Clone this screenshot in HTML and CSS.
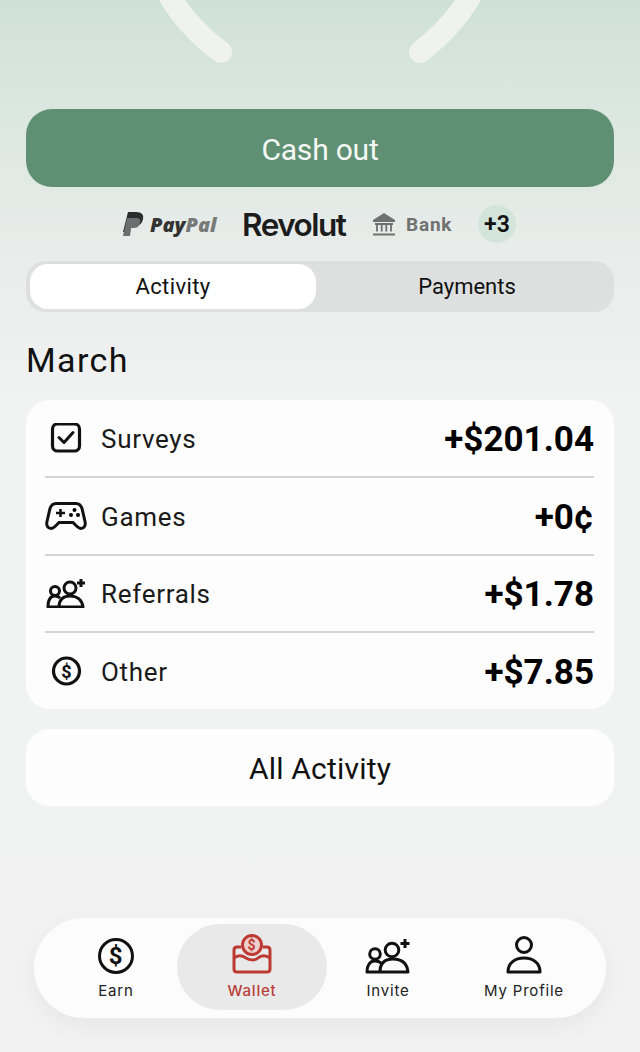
FILE: index.html
```html
<!DOCTYPE html>
<html lang="en">
<head>
<meta charset="utf-8">
<title>Wallet</title>
<link rel="stylesheet" href="styles.css">
</head>
<body>
<main class="page">
  <svg class="hero" width="640" height="109" viewBox="0 0 640 109"><path d="M167 -8Q186 26 221 52M473 -8Q454 26 420 52" fill="none" stroke="#eff2ef" stroke-width="22" stroke-linecap="round"/></svg>
  <button class="cash">Cash out</button>
  <div class="methods">
    <span class="paypal">
      <svg class="pp-mark" width="22" height="25" viewBox="0 0 22 25"><path d="M6 0h8c6 0 8 3 7 7-1 5-4 7-9 7H9l-1 6H1z" fill="#2b2c2d"/><path d="M5 6h9c4 0 5 2 4 5-1 4-3 5-7 5H9l-1 8H1z" fill="#6b6d6e"/></svg>
      <span class="pp-pay">Pay</span><span class="pp-pal">Pal</span>
    </span>
    <span class="revolut">Revolut</span>
    <span class="bank">
      <svg width="24" height="23" viewBox="0 0 24 23"><path d="M12 0 23 7v2H1V7z" fill="#6f7170"/><path d="M1 21.500h22M5 11v7.500M9.700 11v7.500M14.300 11v7.500M19 11v7.500M3 11h18" fill="none" stroke="#6f7170" stroke-width="1.800"/></svg>
      <span>Bank</span>
    </span>
    <span class="more">+3</span>
  </div>
  <div class="tabs">
    <span class="tab tab-on">Activity</span>
    <span class="tab tab-off">Payments</span>
  </div>
  <h1 class="month">March</h1>
  <section class="card">
    <div class="row">
      <svg class="ico" width="42" height="30" viewBox="0 0 42 30"><rect x="7.500" y="1" width="27" height="27" rx="5" fill="none" stroke="#111" stroke-width="3.200"/><path d="M14 14.500l5 5 9-10" fill="none" stroke="#111" stroke-width="3" stroke-linecap="round" stroke-linejoin="round"/></svg>
      <span class="label">Surveys</span><span class="amount">+$201.04</span>
    </div>
    <div class="row">
      <svg class="ico" width="42" height="28" viewBox="0 0 42 28"><path d="M11 1.500h20c3 0 5 2 6 5l3 13c1 4-1 7-4 7-2 0-3-1-5-3l-3-3H14l-3 3c-2 2-3 3-5 3-3 0-5-3-4-7l3-13c1-3 3-5 6-5z" fill="none" stroke="#111" stroke-width="3"/><path d="M11 11h9M15.500 7v8" stroke="#111" stroke-width="2.600" fill="none"/><circle cx="26" cy="13" r="2"/><circle cx="33" cy="13" r="2"/><circle cx="29.500" cy="8" r="2"/></svg>
      <span class="label">Games</span><span class="amount">+0¢</span>
    </div>
    <div class="row">
      <svg class="ico" width="42" height="30" viewBox="0 0 42 30"><circle cx="25" cy="10" r="6" fill="none" stroke="#111" stroke-width="3"/><circle cx="10" cy="13" r="4.500" fill="none" stroke="#111" stroke-width="3"/><path d="M14 29c0-8 5-11 11-11s12 3 13 11zM15 20c-2-2-3-2-5-2-4 0-7 3-7 11h11" fill="none" stroke="#111" stroke-width="3" stroke-linejoin="round"/><path d="M36 1v8M32 5h8" stroke="#111" stroke-width="3"/></svg>
      <span class="label">Referrals</span><span class="amount">+$1.78</span>
    </div>
    <div class="row">
      <svg class="ico" width="42" height="30" viewBox="0 0 42 30"><circle cx="21.500" cy="15" r="13" fill="none" stroke="#111" stroke-width="3.200"/><text x="21.500" y="21.500" class="dollar-sm">$</text></svg>
      <span class="label">Other</span><span class="amount">+$7.85</span>
    </div>
  </section>
  <button class="all">All Activity</button>
  <nav class="nav">
    <div class="nav-item">
      <svg width="38" height="40" viewBox="0 0 38 40"><circle cx="19" cy="20" r="16.500" fill="none" stroke="#111" stroke-width="3"/><text x="19" y="28" class="dollar-lg">$</text></svg>
      <span>Earn</span>
    </div>
    <div class="nav-item nav-on">
      <svg width="40" height="44" viewBox="0 0 40 44"><path d="M9 15H5q-3 0-3 3v19q0 3 3 3h30q3 0 3-3V18q0-3-3-3h-4" fill="none" stroke="#bd3a32" stroke-width="3"/><path d="M2 26c5-4 9-2 12 0s9 3 12 0 8-3 12 0" fill="none" stroke="#bd3a32" stroke-width="3"/><circle cx="20" cy="13" r="9.500" fill="#efcfcb" stroke="#bd3a32" stroke-width="3"/><text x="20" y="18" class="dollar-xs">$</text></svg>
      <span>Wallet</span>
    </div>
    <div class="nav-item">
      <svg width="46" height="40" viewBox="0 0 46 40"><circle cx="27" cy="14" r="6.800" fill="none" stroke="#111" stroke-width="3"/><circle cx="10" cy="18" r="5.300" fill="none" stroke="#111" stroke-width="3"/><path d="M15 36c0-9 5-13 13-13s14 4 15 13zM16 27c-2-2-3-2-6-2-5 0-8 4-8 11h13" fill="none" stroke="#111" stroke-width="3" stroke-linejoin="round"/><path d="M40 3v9M35.500 7.500h9" stroke="#111" stroke-width="3"/></svg>
      <span>Invite</span>
    </div>
    <div class="nav-item">
      <svg width="38" height="40" viewBox="0 0 38 40"><circle cx="19" cy="9" r="7.500" fill="none" stroke="#111" stroke-width="3"/><path d="M3 36c0-9 7-14 16-14s16 5 16 14z" fill="none" stroke="#111" stroke-width="3" stroke-linejoin="round"/></svg>
      <span>My Profile</span>
    </div>
  </nav>
</main>
</body>
</html>
```
FILE: styles.css
```css
* { box-sizing: border-box; }
html, body { margin: 0; padding: 0; }
body {
  width: 640px;
  height: 1052px;
  overflow: hidden;
  background: linear-gradient(180deg, #cfe1d7 0, #dde8e2 130px, #e8ecea 250px, #f1f2f2 400px, #f2f2f2 100%);
  font-family: Roboto, "Noto Sans", sans-serif;
  color: #111;
}
.page { display: flex; flex-direction: column; align-items: center; }
.hero { display: block; }
button { border: 0; font-family: inherit; padding: 0; }
.cash {
  width: 588px; height: 78px; border-radius: 26px; padding-top: 2px;
  background: #5f9073; color: #f4f8f5;
  font-size: 30px; letter-spacing: -.2px;
}
.methods { display: flex; align-items: center; height: 38px; margin-top: 18px; width: 588px; padding-left: 96px; }
.paypal { display: flex; align-items: center; font: italic 800 20px "Open Sans", sans-serif; width: 120px; }
.pp-mark { margin-right: 6px; }
.pp-pay { color: #333; }
.pp-pal { color: #777a79; }
.revolut { font: 600 31.500px Inter, sans-serif; letter-spacing: -1.500px; color: #1c1c1c; width: 130px; }
.bank { display: flex; align-items: center; gap: 10px; font: 700 19px Roboto, sans-serif; color: #707271; letter-spacing: .8px; width: 106px; }
.more { width: 38px; height: 38px; border-radius: 50%; background: #d3e4da; font: 600 23px Roboto, sans-serif; display: flex; align-items: center; justify-content: center; }
.tabs {
  display: flex; width: 588px; height: 51px; margin-top: 18px;
  background: #dedfdf; border-radius: 20px; padding: 3px 0 3px 4px;
}
.tab { display: flex; align-items: center; justify-content: center; font-size: 22px; letter-spacing: .4px; border-radius: 18px; }
.tab-on { background: #fff; width: 286px; flex: 0 0 auto; }
.tab-off { flex: 1; margin-left: 4px; letter-spacing: 0; }
.month { width: 588px; margin: 27px 0 0; height: 61px; font-size: 34px; font-weight: 400; letter-spacing: 1.400px; line-height: 43px; }
.card { width: 588px; height: 309px; background: #fdfdfd; border-radius: 24px; padding: 0 20px 0 19px; display: flex; flex-direction: column; }
.row { flex: 1; display: flex; align-items: center; border-bottom: 2px solid #d3d4d4; }
.row:last-child { border-bottom: 0; }
.ico { flex: 0 0 auto; margin-right: 14px; }
.label { font-size: 26px; letter-spacing: .7px; color: #1a1a1a; flex: 1; padding-top: 2px; }
.amount { font-size: 35px; font-weight: 700; color: #000; padding-top: 3px; }
.dollar-sm, .dollar-lg, .dollar-xs { text-anchor: middle; font-family: Roboto, sans-serif; font-weight: 700; }
.dollar-sm { font-size: 18px; fill: #111; }
.dollar-lg { font-size: 24px; fill: #111; }
.dollar-xs { font-size: 14px; fill: #bd3a32; }
.all { width: 588px; height: 77px; margin-top: 20px; padding-top: 2px; background: #fdfdfd; border-radius: 24px; font-size: 30px; letter-spacing: .2px; color: #111; }
.nav {
  width: 572px; height: 100px; margin-top: 112px; border-radius: 50px;
  background: #fcfcfc; box-shadow: 0 8px 24px rgba(0,0,0,.05);
  display: grid; grid-template-columns: repeat(4, 136px);
  padding: 6px 14px 8px 14px;
}
.nav-item { display: flex; flex-direction: column; align-items: center; font: 400 15px Inter, sans-serif; letter-spacing: .8px; color: #222; padding-top: 12px; gap: 5px; }
.nav-item svg { flex: 0 0 auto; }
.nav-on { margin: 0 -7px; background: #e9e9e9; border-radius: 43px; color: #b8403a; font-weight: 500; padding-top: 8px; }
```
